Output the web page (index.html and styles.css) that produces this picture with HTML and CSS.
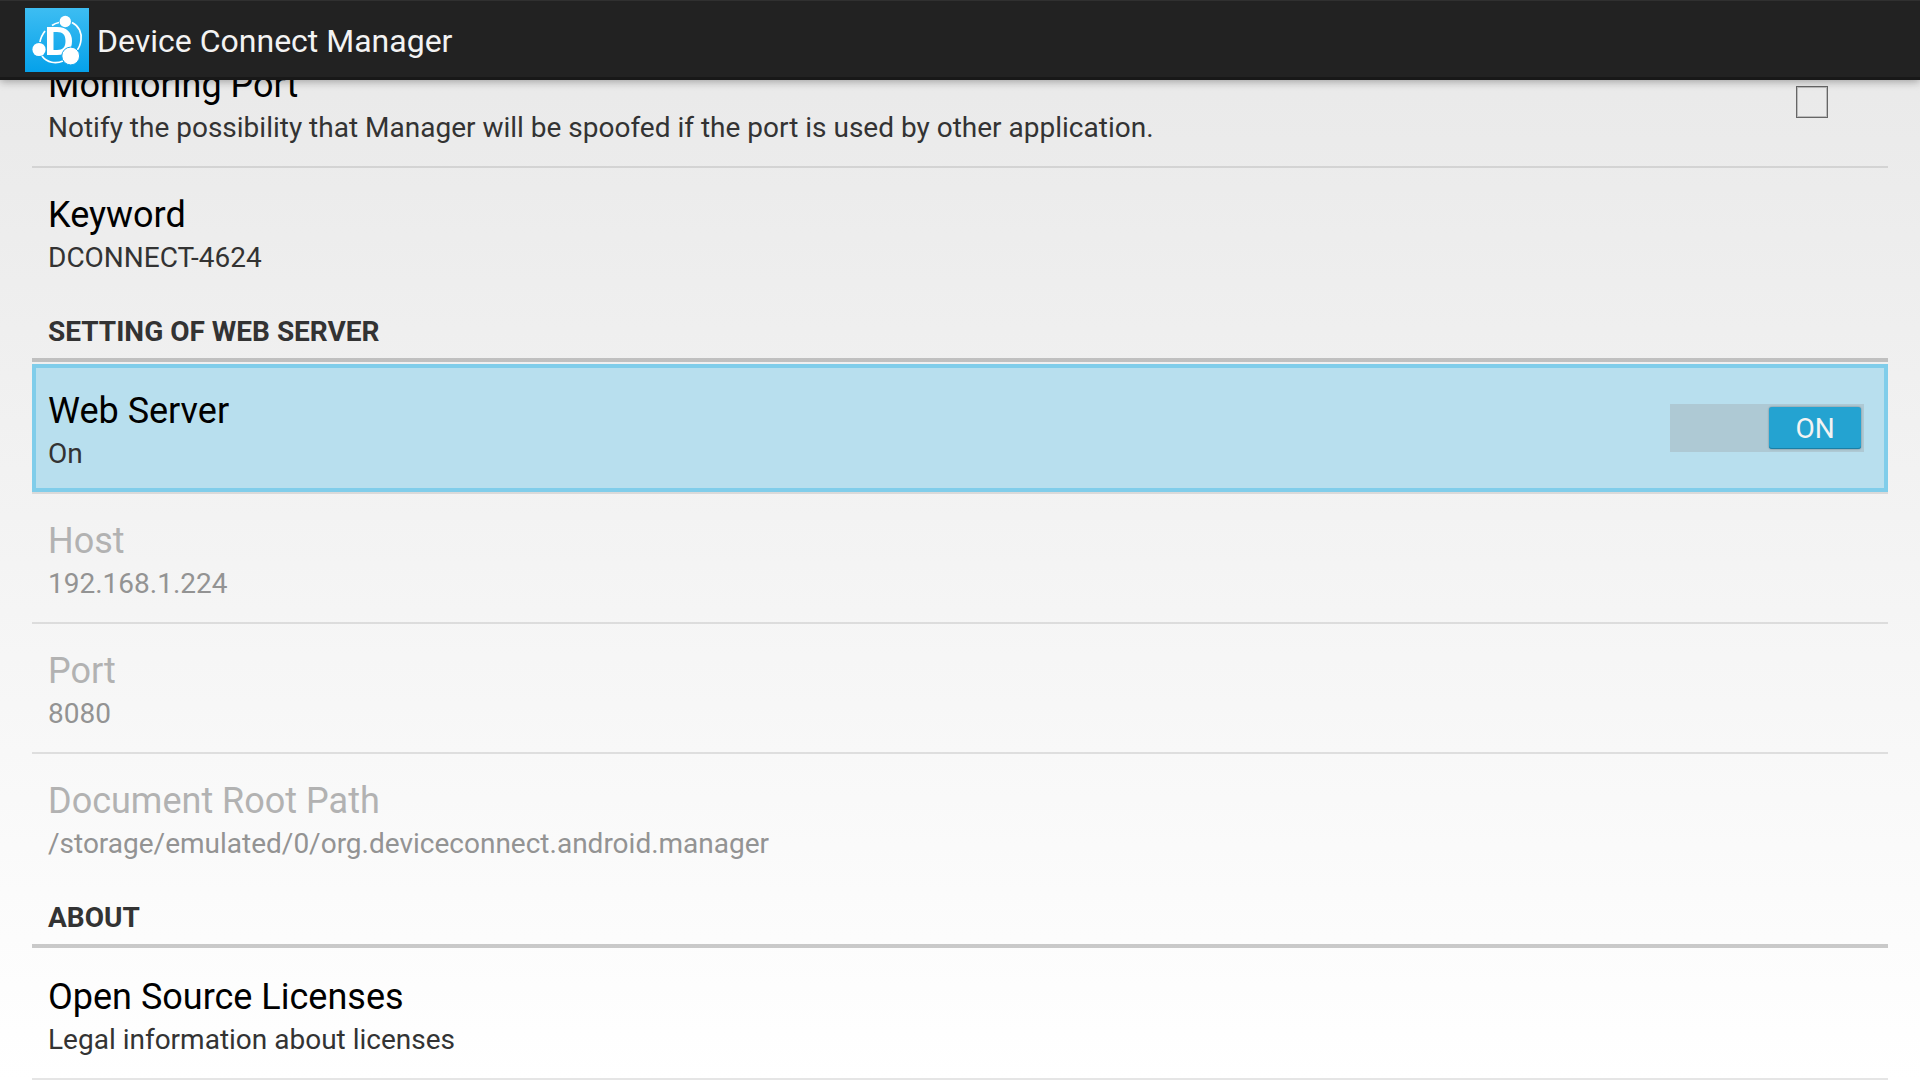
FILE: index.html
```html
<!DOCTYPE html>
<html lang="en">
<head>
<meta charset="utf-8">
<title>Device Connect Manager</title>
<link rel="stylesheet" href="styles.css">
</head>
<body>
<header class="action-bar">
  <svg class="app-icon" viewBox="0 0 64 64" aria-hidden="true">
    <defs>
      <linearGradient id="sky" x1="0" y1="0" x2="0" y2="1">
        <stop offset="0" stop-color="#3dbdf2"/>
        <stop offset="1" stop-color="#05a1ea"/>
      </linearGradient>
    </defs>
    <rect width="64" height="64" fill="url(#sky)"/>
    <g fill="none" stroke="#fff" stroke-width="1.7">
      <path d="M47 14.500C54 18 57 25 56 32C55.500 37 54 40 51.500 43"/>
      <path d="M34 14.500C31 15 29 16 27 17.500"/>
      <path d="M20 23C17 27 15.500 30 15 34"/>
      <path d="M17 48C22 55 31 56 38 53"/>
    </g>
    <path fill="#fff" fill-rule="evenodd" d="M22 19H32C42 19 47 25 47 33C47 42 42 47 32 47H22ZM28.500 24V42H32C38 42 40.500 39 40.500 33C40.500 27 38 24 32 24Z"/>
    <circle cx="40.300" cy="13.500" r="5.700" fill="#fff"/>
    <circle cx="14" cy="41.500" r="6.600" fill="#fff"/>
    <circle cx="45.700" cy="48" r="8.900" fill="#fff" stroke="#16a8ed" stroke-width="1"/>
  </svg>
  <h1 class="app-title">Device Connect Manager</h1>
</header>
<main class="settings">
  <label class="row">
    <span class="text">
      <span class="title">Monitoring Port</span>
      <span class="summary">Notify the possibility that Manager will be spoofed if the port is used by other application.</span>
    </span>
    <input class="check" type="checkbox">
  </label>
  <div class="row row-last">
    <div class="text">
      <span class="title">Keyword</span>
      <span class="summary">DCONNECT-4624</span>
    </div>
  </div>
  <h2 class="category">SETTING OF WEB SERVER</h2>
  <label class="row row-focused">
    <span class="text">
      <span class="title">Web Server</span>
      <span class="summary">On</span>
    </span>
    <span class="switch">
      <input class="switch-input" type="checkbox" role="switch" checked>
      <span class="thumb">ON</span>
    </span>
  </label>
  <div class="row row-disabled">
    <div class="text">
      <span class="title">Host</span>
      <span class="summary">192.168.1.224</span>
    </div>
  </div>
  <div class="row row-disabled">
    <div class="text">
      <span class="title">Port</span>
      <span class="summary">8080</span>
    </div>
  </div>
  <div class="row row-disabled row-last">
    <div class="text">
      <span class="title">Document Root Path</span>
      <span class="summary">/storage/emulated/0/org.deviceconnect.android.manager</span>
    </div>
  </div>
  <h2 class="category">ABOUT</h2>
  <div class="row">
    <div class="text">
      <span class="title">Open Source Licenses</span>
      <span class="summary">Legal information about licenses</span>
    </div>
  </div>
</main>
</body>
</html>
```
FILE: styles.css
```css
* {
  box-sizing: border-box;
}

body {
  margin: 0;
  min-height: 100vh;
  font-family: Roboto, "Liberation Sans", sans-serif;
  color: #000;
  background: linear-gradient(#e8e8e8, #fff);
}

.action-bar {
  position: relative;
  z-index: 1;
  display: flex;
  align-items: center;
  gap: 8px;
  height: 80px;
  padding: 2px 25px 0;
  background: #222;
  border-top: 1px solid #303030;
  border-bottom: 3px solid #181818;
  box-shadow: 0 2px 8px rgba(0, 0, 0, 0.3);
}

.app-icon {
  width: 64px;
  height: 64px;
}

.app-title {
  margin: 0;
  padding-top: 2px;
  font-size: 32px;
  font-weight: 400;
  line-height: 40px;
  color: #f3f3f3;
}

/* The list is scrolled so that its first row runs under the action bar. */
.settings {
  margin: -42px 32px 0;
}

.row {
  display: flex;
  align-items: center;
  justify-content: space-between;
  height: 130px;
  padding: 0 24px 0 16px;
  border-bottom: 2px solid rgba(0, 0, 0, 0.1);
}

.row-last {
  height: 128px;
  border-bottom: 0;
}

.row-focused {
  background: #b8dfee;
  background-clip: padding-box;
  box-shadow: inset 0 0 0 4px #80cdea;
}

.text {
  padding-top: 8px;
}

.title,
.summary {
  display: block;
}

.title {
  font-size: 36px;
  line-height: 44px;
}

.summary {
  font-size: 28px;
  line-height: 42px;
  color: #333;
}

.row-disabled .title {
  color: #b2b2b2;
}

.row-disabled .summary {
  color: #939393;
}

.category {
  margin: 0 0 2px;
  padding: 16px 16px 6px;
  border-bottom: 4px solid rgba(0, 0, 0, 0.2);
  font-size: 28px;
  font-weight: 700;
  line-height: 40px;
  color: #333;
}

.check {
  appearance: none;
  width: 32px;
  height: 32px;
  margin: 0 36px 0 0;
  border: 1px solid #666;
  box-shadow: inset 0 0 0 1px #bbb;
}

.switch {
  display: grid;
  align-items: center;
  width: 194px;
  height: 48px;
}

.switch-input,
.thumb {
  grid-area: 1 / 1;
}

.switch-input {
  appearance: none;
  width: 100%;
  height: 100%;
  margin: 0;
  background: #aec9d4;
}

.thumb {
  justify-self: end;
  width: 92px;
  height: 42px;
  margin-right: 3px;
  border-radius: 3px;
  background: #24a3d1;
  box-shadow: inset 0 -1px 0 #1b7fa5, 0 0 2px rgba(0, 0, 0, 0.4);
  font-size: 28px;
  line-height: 44px;
  text-align: center;
  color: #f3f3f3;
}
```
